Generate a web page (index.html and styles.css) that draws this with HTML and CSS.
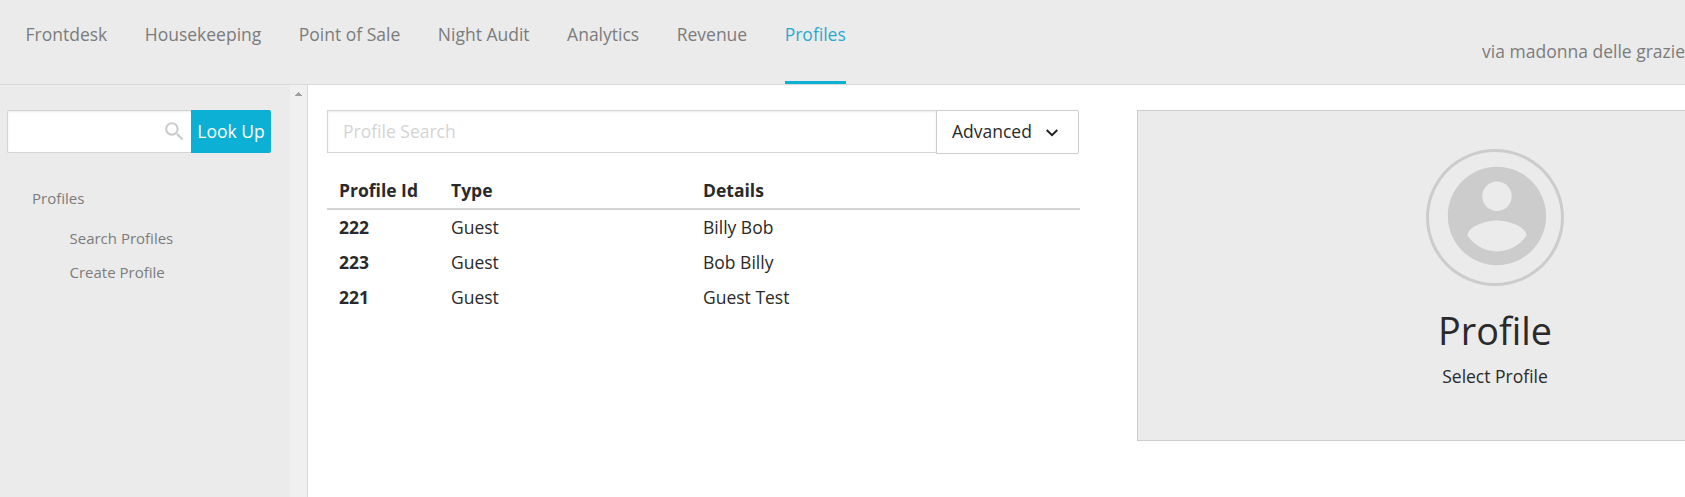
FILE: index.html
```
<!DOCTYPE html>
<html lang="en">
<head>
<meta charset="utf-8">
<title>Profiles</title>
<link rel="stylesheet" href="styles.css">
</head>
<body>
<header class="topbar">
  <nav class="nav">
    <a class="nav-item">Frontdesk</a>
    <a class="nav-item">Housekeeping</a>
    <a class="nav-item">Point of Sale</a>
    <a class="nav-item">Night Audit</a>
    <a class="nav-item">Analytics</a>
    <a class="nav-item">Revenue</a>
    <a class="nav-item active">Profiles</a>
  </nav>
  <div class="property">via madonna delle grazie</div>
</header>
<div class="body">
  <aside class="sidebar">
    <div class="side-content">
      <div class="lookup">
        <div class="lookup-field">
          <svg class="search-icon" viewBox="0 0 24 24"><path d="M15.5 14h-.79l-.28-.27A6.47 6.47 0 0 0 16 9.500 6.500 6.500 0 1 0 9.500 16c1.610 0 3.090-.59 4.230-1.570l.27.28v.79l5 4.990L20.490 19l-4.990-5zm-6 0a4.500 4.500 0 1 1 0-9 4.500 4.500 0 0 1 0 9z"/></svg>
        </div>
        <button class="lookup-btn">Look Up</button>
      </div>
      <div class="side-menu">
        <div class="side-title">Profiles</div>
        <a class="side-link">Search Profiles</a>
        <a class="side-link">Create Profile</a>
      </div>
    </div>
    <div class="scrollbar"><svg class="scroll-arrow" viewBox="0 0 7 4" shape-rendering="crispEdges"><path d="M3 0h1v1h1v1h1v1h1v1H0V3h1V2h1V1h1z"/></svg></div>
  </aside>
  <main class="main">
    <section class="results">
      <div class="search">
        <div class="search-input">Profile Search</div>
        <button class="advanced">Advanced
          <svg class="chevron" viewBox="0 0 12 8"><path d="M.7 1L6 6.200 11.300 1"/></svg>
        </button>
      </div>
      <table class="table">
        <thead><tr><th class="col-id">Profile Id</th><th class="col-type">Type</th><th>Details</th></tr></thead>
        <tbody>
          <tr><td class="id">222</td><td>Guest</td><td>Billy Bob</td></tr>
          <tr><td class="id">223</td><td>Guest</td><td>Bob Billy</td></tr>
          <tr><td class="id">221</td><td>Guest</td><td>Guest Test</td></tr>
        </tbody>
      </table>
    </section>
    <section class="card">
      <div class="avatar">
        <svg class="avatar-icon" viewBox="0 0 24 24"><path d="M12 2C6.480 2 2 6.480 2 12s4.480 10 10 10 10-4.480 10-10S17.520 2 12 2zm0 3c1.660 0 3 1.340 3 3s-1.340 3-3 3-3-1.340-3-3 1.340-3 3-3zm0 14.200c-2.500 0-4.710-1.280-6-3.220.03-1.990 4-3.080 6-3.080 1.990 0 5.970 1.090 6 3.080-1.290 1.940-3.500 3.220-6 3.220z"/></svg>
      </div>
      <h1 class="card-title">Profile</h1>
      <p class="card-text">Select Profile</p>
    </section>
  </main>
</div>
</body>
</html>
```
FILE: styles.css
```
* { box-sizing: border-box; }
body {
  margin: 0;
  height: 497px;
  overflow: hidden;
  display: flex;
  flex-direction: column;
  font-family: "Open Sans", sans-serif;
  font-size: 17.500px;
  font-weight: 400;
  color: #2a2a2a;
  background: #fff;
}
.topbar {
  flex: none;
  display: flex;
  justify-content: space-between;
  height: 85px;
  padding-left: 25.500px;
  background: #ebebeb;
  border-bottom: 1px solid #d9d9d9;
  color: #7c7c7c;
}
.nav { display: flex; gap: 37.500px; }
.nav-item {
  padding-top: 22px;
  line-height: 25px;
  white-space: nowrap;
}
.active { color: #29aad0; border-bottom: 3px solid #0cb0d4; }
.property { padding-top: 39px; line-height: 25px; white-space: nowrap; }
.body { flex: 1; display: flex; min-height: 0; }
.sidebar {
  flex: none;
  display: flex;
  width: 308px;
  background: #ebebeb;
  border-right: 1px solid #d9d9d9;
}
.side-content { width: 290px; padding: 25px 19px 0 7px; }
.lookup { display: flex; height: 43px; }
.lookup-field {
  flex: 1;
  display: flex;
  align-items: center;
  justify-content: flex-end;
  padding-right: 4px;
  background: #fff;
  border: 1px solid #d4d4d4;
  border-right: 0;
  border-radius: 2px 0 0 2px;
  box-shadow: inset 0 1px 2px rgba(0, 0, 0, .08);
}
.search-icon { width: 25px; height: 25px; margin-top: -1px; fill: #ccc; }
.lookup-btn {
  width: 80px;
  padding: 0 0 2px;
  border: 0;
  border-radius: 0 2px 2px 0;
  background: #0cb0d4;
  color: #fff;
  font: 400 17.500px "Open Sans", sans-serif;
}
.side-menu {
  display: flex;
  flex-direction: column;
  padding: 35px 0 0 25px;
  font-size: 15px;
  line-height: 20px;
  color: #7c7c7c;
}
.side-title { margin-bottom: 20px; }
.side-link { padding-left: 37.500px; margin-bottom: 14px; }
.scrollbar {
  width: 17px;
  display: flex;
  justify-content: center;
  align-items: flex-start;
  padding-top: 7px;
  background: #f0f0f0;
}
.scroll-arrow { width: 7px; height: 4px; fill: #a0a0a0; }
.main { flex: 1; display: flex; min-width: 0; padding: 25px 0 0 19px; gap: 57px; overflow: hidden; }
.results { flex: none; width: 753px; }
.search { display: flex; align-items: flex-start; height: 44px; }
.search-input {
  width: 609px;
  height: 43px;
  padding-left: 15px;
  line-height: 41px;
  border: 1px solid #d4d4d4;
  border-right: 0;
  box-shadow: inset 0 1px 2px rgba(0, 0, 0, .08);
  color: #d4d4d4;
}
.advanced {
  display: flex;
  align-items: center;
  gap: 14px;
  width: 143px;
  height: 44px;
  padding: 0 0 2px 15px;
  border: 1px solid #ccc;
  border-radius: 0 2px 2px 0;
  background: #fff;
  color: #2a2a2a;
  font: 400 17.500px "Open Sans", sans-serif;
}
.chevron { width: 12px; height: 8px; margin-top: 4px; fill: none; stroke: #222; stroke-width: 2; }
.table {
  width: 753px;
  margin-top: 18px;
  border-collapse: separate;
  border-spacing: 0;
  table-layout: fixed;
}
.table th, .table td { padding: 0 12px; height: 35px; line-height: 25px; text-align: left; }
.table th { height: 38px; font-weight: 700; border-bottom: 2px solid #d4d4d4; white-space: nowrap; }
.table td { padding-bottom: 1px; }
.table .id { font-weight: 700; }
.col-id { width: 112px; }
.col-type { width: 252px; }
.card {
  flex: none;
  display: flex;
  flex-direction: column;
  align-items: center;
  width: 716px;
  height: 331px;
  padding-top: 38px;
  background: #ebebeb;
  border: 1px solid #ccc;
}
.avatar {
  width: 138px;
  height: 137px;
  padding: 5px 0 0 8.500px;
  border: 3px solid #ccc;
  border-radius: 50%;
}
.avatar-icon { display: block; width: 118px; height: 118px; fill: #ccc; }
.card-title { margin: 18px 0 0; font-size: 37.800px; font-weight: 400; line-height: 54px; }
.card-text { margin: 6px 0 0; line-height: 25px; }
```
